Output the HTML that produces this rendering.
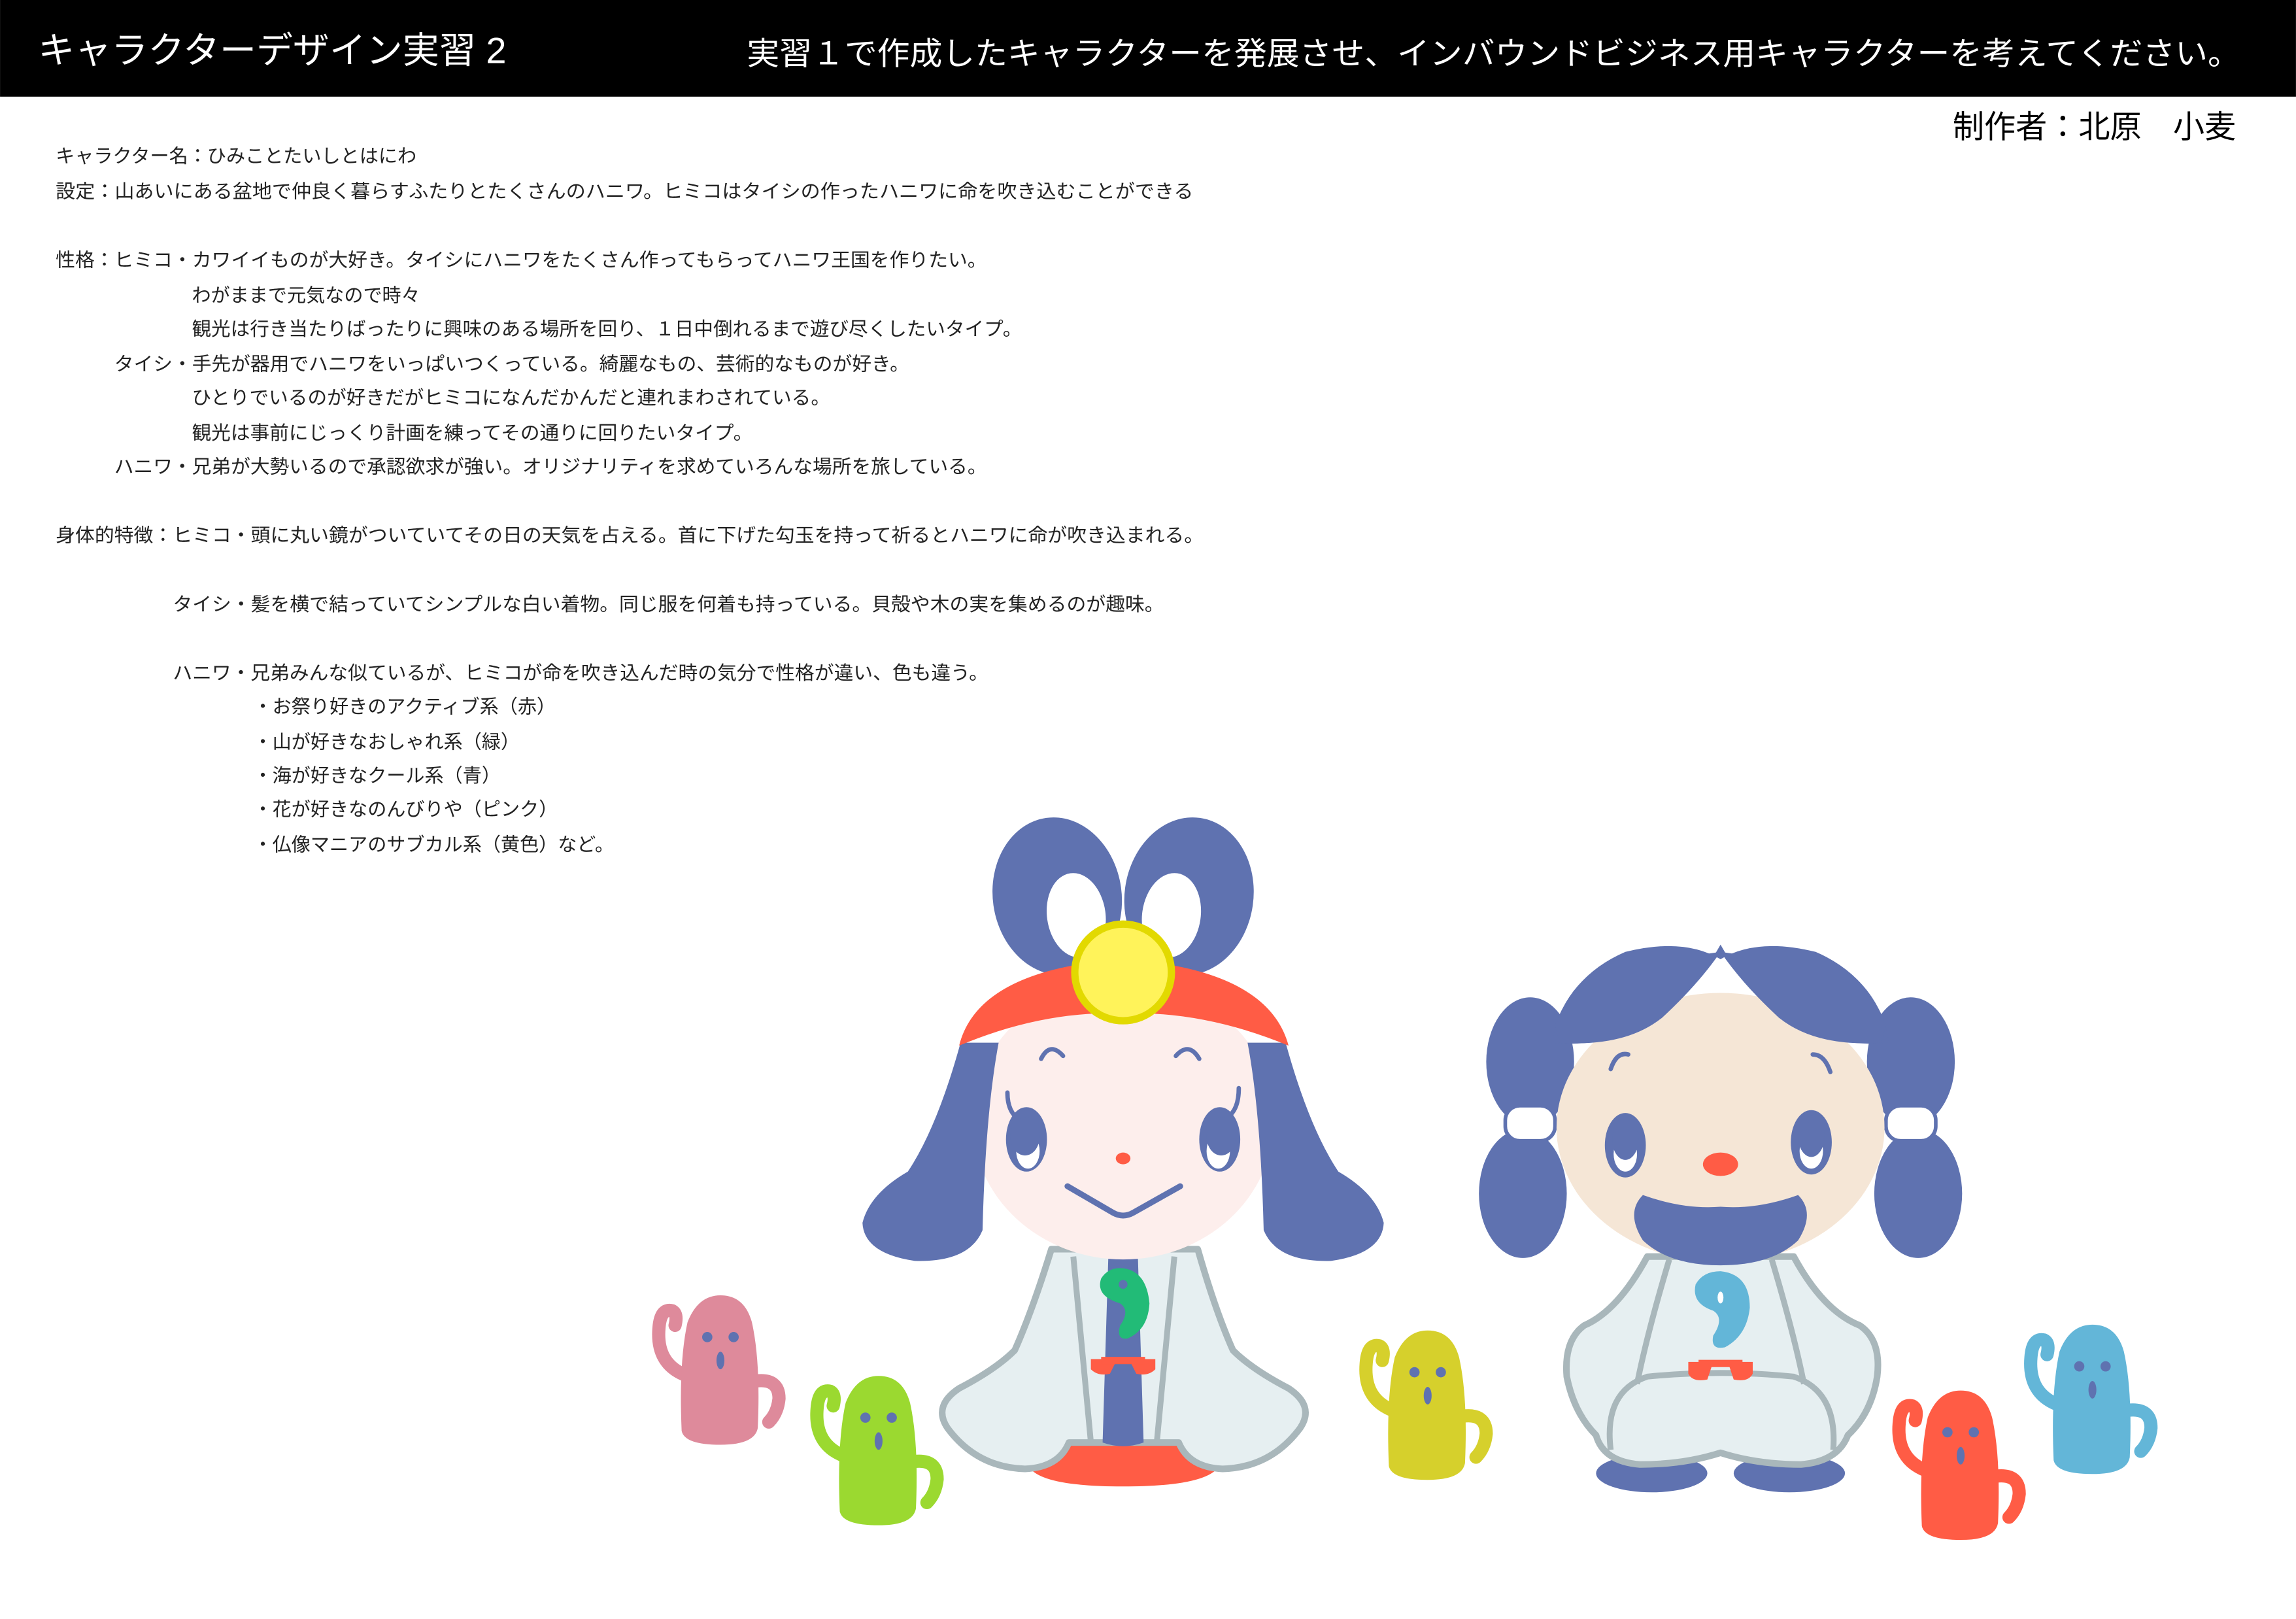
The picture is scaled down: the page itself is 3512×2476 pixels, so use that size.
<!DOCTYPE html>
<html><head><meta charset="utf-8">
<style>
html,body{margin:0;padding:0;background:#fff;}
svg{display:block;}
text{font-family:"Liberation Sans","Noto Sans CJK JP",sans-serif;}
</style></head>
<body>
<svg width="3512" height="2476" viewBox="0 0 1568 1105.5" xmlns="http://www.w3.org/2000/svg">
<rect x="0" y="0" width="1568" height="1105.5" fill="#fff"/>
<rect x="0" y="0" width="1568" height="66" fill="#000"/>
<text x="26" y="43" font-size="25" fill="#fff">キャラクターデザイン実習 2</text>
<text x="510" y="44" font-size="21.5" fill="#fff" textLength="1020" lengthAdjust="spacingAndGlyphs">実習１で作成したキャラクターを発展させ、インバウンドビジネス用キャラクターを考えてください。</text>
<text x="1527" y="94" font-size="21.5" fill="#000" text-anchor="end">制作者：北原　小麦</text>

<g font-size="13" fill="#222">
<text x="38" y="111">キャラクター名：ひみことたいしとはにわ</text>
<text x="38" y="135" textLength="777" lengthAdjust="spacingAndGlyphs">設定：山あいにある盆地で仲良く暮らすふたりとたくさんのハニワ。ヒミコはタイシの作ったハニワに命を吹き込むことができる</text>
<text x="38" y="182" textLength="636" lengthAdjust="spacingAndGlyphs">性格：ヒミコ・カワイイものが大好き。タイシにハニワをたくさん作ってもらってハニワ王国を作りたい。</text>
<text x="131" y="206">わがままで元気なので時々</text>
<text x="131" y="229" textLength="567" lengthAdjust="spacingAndGlyphs">観光は行き当たりばったりに興味のある場所を回り、１日中倒れるまで遊び尽くしたいタイプ。</text>
<text x="78" y="253" textLength="543" lengthAdjust="spacingAndGlyphs">タイシ・手先が器用でハニワをいっぱいつくっている。綺麗なもの、芸術的なものが好き。</text>
<text x="131" y="276" textLength="436" lengthAdjust="spacingAndGlyphs">ひとりでいるのが好きだがヒミコになんだかんだと連れまわされている。</text>
<text x="131" y="300" textLength="383" lengthAdjust="spacingAndGlyphs">観光は事前にじっくり計画を練ってその通りに回りたいタイプ。</text>
<text x="78" y="323" textLength="596" lengthAdjust="spacingAndGlyphs">ハニワ・兄弟が大勢いるので承認欲求が強い。オリジナリティを求めていろんな場所を旅している。</text>
<text x="38" y="370" textLength="784" lengthAdjust="spacingAndGlyphs">身体的特徴：ヒミコ・頭に丸い鏡がついていてその日の天気を占える。首に下げた勾玉を持って祈るとハニワに命が吹き込まれる。</text>
<text x="118" y="417" textLength="677" lengthAdjust="spacingAndGlyphs">タイシ・髪を横で結っていてシンプルな白い着物。同じ服を何着も持っている。貝殻や木の実を集めるのが趣味。</text>
<text x="118" y="464" textLength="557" lengthAdjust="spacingAndGlyphs">ハニワ・兄弟みんな似ているが、ヒミコが命を吹き込んだ時の気分で性格が違い、色も違う。</text>
<text x="173" y="487">・お祭り好きのアクティブ系（赤）</text>
<text x="173" y="511">・山が好きなおしゃれ系（緑）</text>
<text x="173" y="534">・海が好きなクール系（青）</text>
<text x="173" y="557">・花が好きなのんびりや（ピンク）</text>
<text x="173" y="581">・仏像マニアのサブカル系（黄色）など。</text>
</g>

<defs>
<g id="hb">
<path d="M-24,54 Q-44,46 -42,22 Q-41,8 -33,10 Q-29,12 -31,20" fill="none" stroke-width="9" stroke-linecap="round"/>
<path d="M24,58 Q40,56 40,70 Q39,80 33,86" fill="none" stroke-width="9" stroke-linecap="round"/>
<path d="M-26,92 Q-28,45 -22,18 Q-15,0 0,0 Q16,0 21,18 Q27,45 25,90 Q23,101 0,101 Q-24,101 -26,92 Z"/>
<circle cx="-9" cy="28" r="4" fill="#5f72b0"/>
<circle cx="9" cy="28" r="4" fill="#5f72b0"/>
<ellipse cx="0" cy="44" rx="3.2" ry="6.5" fill="#5f72b0"/>
</g>
</defs>

<use href="#hb" x="492" y="885" fill="#de8a9b" stroke="#de8a9b"/>
<use href="#hb" x="600" y="940" fill="#9bd930" stroke="#9bd930"/>
<use href="#hb" x="975" y="909" fill="#d6d02c" stroke="#d6d02c"/>
<use href="#hb" x="1339" y="950" fill="#ff5c45" stroke="#ff5c45"/>
<use href="#hb" x="1429" y="905" fill="#63b6d8" stroke="#63b6d8"/>

<!-- HIMIKO -->
<g>
<ellipse cx="722" cy="612" rx="44" ry="54" fill="#5f72b0" transform="rotate(-8 722 612)"/>
<ellipse cx="812" cy="612" rx="44" ry="54" fill="#5f72b0" transform="rotate(8 812 612)"/>
<ellipse cx="735" cy="625" rx="20" ry="29" fill="#fff" transform="rotate(-8 735 625)"/>
<ellipse cx="800" cy="625" rx="20" ry="29" fill="#fff" transform="rotate(8 800 625)"/>
<path d="M680,985 Q675,975 690,968 L845,968 Q860,975 857,987 Q840,998 832,1002 Q822,1015 767,1015 Q712,1015 703,1002 Q690,995 680,985 Z" fill="#ff5c45"/>
<path d="M718,853 L818,853 Q830,895 842,922 Q855,935 880,948 Q898,960 888,975 Q868,1002 835,1003 Q812,1002 805,985 L730,985 Q723,1002 700,1003 Q667,1002 647,975 Q637,960 655,948 Q680,935 693,922 Q705,895 718,853 Z" fill="#e6eff1" stroke="#a9b7bb" stroke-width="4.5" stroke-linejoin="round"/>
<path d="M733,858 Q740,930 745,985" fill="none" stroke="#a9b7bb" stroke-width="4"/>
<path d="M802,858 Q795,930 790,985" fill="none" stroke="#a9b7bb" stroke-width="4"/>
<path d="M757,855 L777,855 L781,985 Q767,990 753,985 Z" fill="#5f72b0"/>
<ellipse cx="767" cy="765" rx="103" ry="95" fill="#fdeeec"/>
<path d="M656,712 L682,712 Q673,760 671,840 Q662,862 625,861 Q590,856 589,835 Q594,815 620,800 Q640,770 656,712 Z" fill="#5f72b0"/>
<path d="M878,712 L852,712 Q861,760 863,840 Q872,862 909,861 Q944,856 945,835 Q940,815 914,800 Q894,770 878,712 Z" fill="#5f72b0"/>
<path d="M655,714 Q668,662 767,655 Q866,662 880,714 Q822,690 767,692 Q712,690 655,714 Z" fill="#ff5c45"/>
<circle cx="767" cy="664" r="33" fill="#fff35a" stroke="#e2d900" stroke-width="5"/>
<path d="M711,723 Q717,711 726,721" fill="none" stroke="#5f72b0" stroke-width="3" stroke-linecap="round"/>
<path d="M803,721 Q812,711 819,723" fill="none" stroke="#5f72b0" stroke-width="3" stroke-linecap="round"/>
<path d="M688,746 Q688,760 697,765" fill="none" stroke="#5f72b0" stroke-width="3" stroke-linecap="round"/>
<path d="M846,743 Q846,758 838,763" fill="none" stroke="#5f72b0" stroke-width="3" stroke-linecap="round"/>
<ellipse cx="701" cy="778" rx="14" ry="22" fill="#5f72b0"/>
<ellipse cx="702" cy="786" rx="8" ry="12" fill="#fff"/>
<ellipse cx="700" cy="776" rx="10" ry="13" fill="#5f72b0"/>
<ellipse cx="833" cy="778" rx="14" ry="22" fill="#5f72b0"/>
<ellipse cx="832" cy="786" rx="8" ry="12" fill="#fff"/>
<ellipse cx="834" cy="776" rx="10" ry="13" fill="#5f72b0"/>
<ellipse cx="767" cy="791" rx="5" ry="4" fill="#ff5c45"/>
<path d="M729,810 L760,828 Q767,832 774,828 L806,810" fill="none" stroke="#5f72b0" stroke-width="4" stroke-linecap="round" stroke-linejoin="round"/>
<path d="M767,866 Q783,868 785,890 Q784,908 770,914 Q762,915 765,905 Q772,895 765,890 Q748,885 752,873 Q757,865 767,866 Z" fill="#22bb77"/>
<circle cx="767" cy="877" r="3" fill="#5f72b0"/>
<path d="M745,928 L763,928 L758,938 Q750,940 745,935 Z M789,928 L771,928 L776,938 Q784,940 789,935 Z" fill="#ff5c45"/>
<path d="M752,929 L782,929" stroke="#ff5c45" stroke-width="5"/>
</g>

<!-- TAISHI -->
<g>
<ellipse cx="1045" cy="725" rx="30" ry="44" fill="#5f72b0"/>
<ellipse cx="1305" cy="725" rx="30" ry="44" fill="#5f72b0"/>
<ellipse cx="1040" cy="815" rx="30" ry="44" fill="#5f72b0"/>
<ellipse cx="1310" cy="815" rx="30" ry="44" fill="#5f72b0"/>
<rect x="1028" y="755" width="34" height="24" rx="10" fill="#fff" stroke="#5f72b0" stroke-width="2.5"/>
<rect x="1288" y="755" width="34" height="24" rx="10" fill="#fff" stroke="#5f72b0" stroke-width="2.5"/>
<ellipse cx="1128" cy="1006" rx="38" ry="13" fill="#5f72b0"/>
<ellipse cx="1222" cy="1006" rx="38" ry="13" fill="#5f72b0"/>
<path d="M1125,858 L1225,858 Q1245,895 1270,905 Q1285,915 1282,940 Q1278,965 1262,980 Q1255,998 1230,1000 Q1200,1000 1175,992 Q1150,1000 1120,1000 Q1095,998 1090,980 Q1075,965 1070,940 Q1068,915 1082,905 Q1105,895 1125,858 Z" fill="#e6eff1" stroke="#a9b7bb" stroke-width="4.5" stroke-linejoin="round"/>
<path d="M1140,860 Q1125,910 1118,945" fill="none" stroke="#a9b7bb" stroke-width="4"/>
<path d="M1210,860 Q1225,910 1232,945" fill="none" stroke="#a9b7bb" stroke-width="4"/>
<path d="M1100,990 Q1095,950 1125,940 Q1175,935 1225,940 Q1255,950 1252,990" fill="none" stroke="#a9b7bb" stroke-width="4"/>
<ellipse cx="1175" cy="770" rx="112" ry="92" fill="#f5e6d6"/>
<path d="M1060,712 Q1065,680 1090,662 L1175,650 L1260,662 Q1285,680 1290,712 Q1250,716 1215,695 Q1190,672 1175,650 Q1160,672 1135,695 Q1100,716 1060,712 Z" fill="#5f72b0"/>
<path d="M1062,700 Q1075,665 1110,650 Q1150,640 1175,655 Q1200,640 1240,650 Q1275,665 1288,700 L1285,712 Q1240,715 1215,695 Q1190,672 1175,645 Q1160,672 1135,695 Q1110,715 1065,712 Z" fill="#5f72b0"/>
<path d="M1100,730 Q1104,718 1112,720" fill="none" stroke="#5f72b0" stroke-width="3" stroke-linecap="round"/>
<path d="M1238,720 Q1246,720 1250,732" fill="none" stroke="#5f72b0" stroke-width="3" stroke-linecap="round"/>
<ellipse cx="1110" cy="782" rx="14" ry="22" fill="#5f72b0"/>
<ellipse cx="1110" cy="788" rx="8" ry="12" fill="#fff"/>
<ellipse cx="1110" cy="778" rx="9" ry="14" fill="#5f72b0"/>
<ellipse cx="1237" cy="780" rx="14" ry="22" fill="#5f72b0"/>
<ellipse cx="1237" cy="786" rx="8" ry="12" fill="#fff"/>
<ellipse cx="1237" cy="776" rx="9" ry="14" fill="#5f72b0"/>
<ellipse cx="1175" cy="795" rx="12" ry="8" fill="#ff5c45"/>
<path d="M1122,816 Q1150,826 1175,824 Q1200,826 1228,816 Q1240,828 1228,847 Q1210,864 1175,864 Q1140,864 1122,847 Q1110,828 1122,816 Z" fill="#5f72b0"/>
<path d="M1175,868 Q1195,870 1195,893 Q1193,912 1178,920 Q1168,922 1170,912 Q1178,900 1170,895 Q1155,890 1158,877 Q1163,868 1175,868 Z" fill="#63b6d8"/>
<ellipse cx="1175" cy="886" rx="2" ry="4" fill="#fff"/>
<path d="M1153,930 L1170,930 L1166,942 Q1156,944 1153,938 Z M1197,930 L1180,930 L1184,942 Q1194,944 1197,938 Z" fill="#ff5c45"/>
<path d="M1160,931 L1190,931" stroke="#ff5c45" stroke-width="5"/>
</g>
</svg>
</body></html>
